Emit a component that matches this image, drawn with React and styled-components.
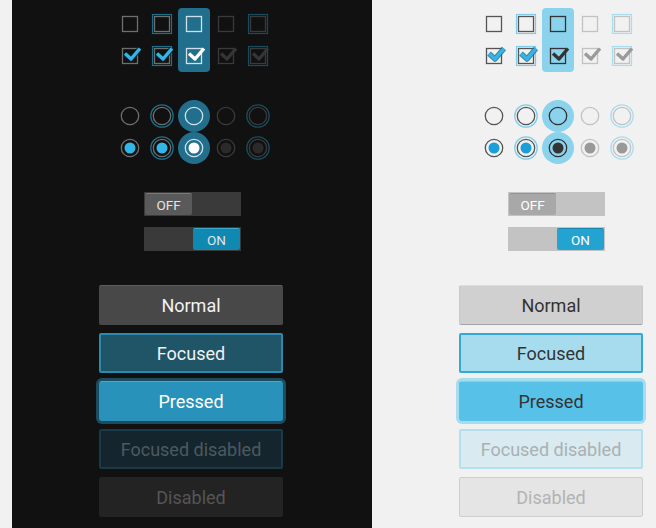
import React from 'react';
import styled, { createGlobalStyle } from 'styled-components';

const GlobalStyle = createGlobalStyle`
  html, body {
    margin: 0;
    padding: 0;
    background: #f1f1f1;
    font-family: Roboto, "Noto Sans", sans-serif;
  }
`;

const palettes = {
  dark: {
    bg: '#111111',
    box: '#6e6e6e',
    boxOff: '#3a3a3a',
    ring: '#1b6d8a',
    ringOff: '#174b5d',
    press: '#216f8d',
    pressBox: '#cfe0e7',
    check: '#33b5e5',
    checkEdge: '#06222d',
    checkPress: '#ffffff',
    checkOff: '#353535',
    dot: '#33b5e5',
    dotPress: '#ffffff',
    dotOff: '#2a2a2a',
  },
  light: {
    bg: '#f1f1f1',
    box: '#555555',
    boxOff: '#c2c2c2',
    ring: '#7fcdeb',
    ringOff: '#a9def1',
    press: '#8bd2ec',
    pressBox: '#333333',
    check: '#33b5e5',
    checkEdge: '#1c6e8d',
    checkPress: '#333333',
    checkOff: '#9a9a9a',
    dot: '#1a9fd6',
    dotPress: '#333333',
    dotOff: '#999999',
  },
};

const states = ['normal', 'focused', 'pressed', 'disabled', 'disabledFocused'];

const Checkbox = ({ p, state, checked }) => {
  const off = state === 'disabled' || state === 'disabledFocused';
  const boxColor = state === 'pressed' ? p.pressBox : off ? p.boxOff : p.box;
  let checkColor = p.check;
  if (state === 'pressed') checkColor = p.checkPress;
  if (off) checkColor = p.checkOff;
  return (
    <svg width="32" height="32" viewBox="0 0 32 32">
      {(state === 'focused' || state === 'disabledFocused') && (
        <rect x="6.5" y="6.5" width="19" height="19" fill="none"
          stroke={state === 'focused' ? p.ring : p.ringOff} strokeWidth="1.2" />
      )}
      <rect x="8.5" y="8.5" width="15" height="15" fill="none" stroke={boxColor} strokeWidth="1.3" />
      {checked && !off && state !== 'pressed' && (
        <path d="M11 13.5 L17 19 L26 8.5" fill="none" stroke={p.checkEdge}
          strokeWidth="5.5" strokeLinejoin="round" opacity="0.8" />
      )}
      {checked && (
        <path d="M11 13.5 L17 19 L26 8.5" fill="none" stroke={checkColor}
          strokeWidth="3.4" strokeLinejoin="round" />
      )}
    </svg>
  );
};

const Radio = ({ p, state, checked }) => {
  const off = state === 'disabled' || state === 'disabledFocused';
  const ringColor = state === 'pressed' ? p.pressBox : off ? p.boxOff : p.box;
  let dotColor = p.dot;
  if (state === 'pressed') dotColor = p.dotPress;
  if (off) dotColor = p.dotOff;
  return (
    <svg width="32" height="32" viewBox="0 0 32 32">
      {state === 'pressed' && <circle cx="16" cy="16" r="16" fill={p.press} />}
      {(state === 'focused' || state === 'disabledFocused') && (
        <circle cx="16" cy="16" r="11.2" fill="none"
          stroke={state === 'focused' ? p.ring : p.ringOff} strokeWidth="1.3" />
      )}
      <circle cx="16" cy="16" r="8.7" fill="none" stroke={ringColor} strokeWidth="1.3" />
      {checked && <circle cx="16" cy="16" r="5.5" fill={dotColor} />}
    </svg>
  );
};

const Toggle = ({ on, label }) => (
  <Track $on={on}>
    <Thumb $on={on}>{label}</Thumb>
  </Track>
);

const buttons = [
  ['normal', 'Normal'],
  ['focused', 'Focused'],
  ['pressed', 'Pressed'],
  ['focusedDisabled', 'Focused disabled'],
  ['disabled', 'Disabled'],
];

const WidgetPanel = ({ theme, shift }) => {
  const p = palettes[theme];
  const dark = theme === 'dark';
  return (
    <Panel $dark={dark}>
      <ControlGrid $shift={shift + 2}>
        {[false, true].map((checked) =>
          states.map((s) => (
            <Cell key={`c-${checked}-${s}`} $press={s === 'pressed'} $bg={p.press} $top={!checked}>
              <Checkbox p={p} state={s} checked={checked} />
            </Cell>
          ))
        )}
      </ControlGrid>
      <RadioGrid $shift={shift + 2}>
        {[false, true].map((checked) =>
          states.map((s) => (
            <Spot key={`r-${checked}-${s}`}>
              <Radio p={p} state={s} checked={checked} />
            </Spot>
          ))
        )}
      </RadioGrid>
      <ToggleStack $shift={shift} $dark={dark}>
        <Toggle on={false} label="OFF" />
        <Toggle on label="ON" />
      </ToggleStack>
      <ButtonStack>
        {buttons.map(([kind, label]) => (
          <Button key={kind} $kind={kind} $dark={dark}>{label}</Button>
        ))}
      </ButtonStack>
    </Panel>
  );
};

const App = () => (
  <>
    <GlobalStyle />
    <Page>
      <WidgetPanel theme="dark" shift={0} />
      <WidgetPanel theme="light" shift={4} />
    </Page>
  </>
);

const Page = styled.div`
  display: flex;
  height: 528px;
  padding-left: 12px;
  overflow: hidden;
`;

const Panel = styled.div`
  width: 360px;
  flex-shrink: 0;
  height: 528px;
  box-sizing: border-box;
  padding-top: 8px;
  display: flex;
  flex-direction: column;
  align-items: center;
  background: ${({ $dark }) => ($dark ? '#111111' : '#f1f1f1')};

  --track: ${({ $dark }) => ($dark ? '#3a3a3a' : '#c3c3c3')};
  --thumb-off: ${({ $dark }) => ($dark ? '#5a5a5a' : '#a8a8a8')};
  --thumb-off-edge: ${({ $dark }) => ($dark ? '#7a7a7a' : '#939393')};
  --thumb-on: ${({ $dark }) => ($dark ? '#0f88b2' : '#22a3d2')};
  --thumb-on-edge: ${({ $dark }) => ($dark ? '#3fa8cc' : '#1a86ae')};
  --thumb-text: ${({ $dark }) => ($dark ? '#e4e4e4' : '#ffffff')};
`;

const ControlGrid = styled.div`
  display: grid;
  grid-template-columns: repeat(5, 32px);
  grid-auto-rows: 32px;
  margin-left: ${({ $shift }) => $shift * 2}px;
`;

const Cell = styled.div`
  width: 32px;
  height: 32px;
  background: ${({ $press, $bg }) => ($press ? $bg : 'transparent')};
  border-radius: ${({ $top }) => ($top ? '4px 4px 0 0' : '0 0 4px 4px')};

  svg {
    display: block;
  }
`;

const RadioGrid = styled(ControlGrid)`
  margin-top: 28px;
`;

const Spot = styled.div`
  width: 32px;
  height: 32px;

  svg {
    display: block;
  }
`;

const ToggleStack = styled.div`
  display: flex;
  flex-direction: column;
  gap: 11px;
  margin-top: 28px;
  margin-left: ${({ $shift }) => $shift * 2 + 1}px;
`;

const Track = styled.div`
  width: 97px;
  height: 24px;
  box-sizing: border-box;
  padding: 1px;
  background: var(--track);
  display: flex;
  justify-content: ${({ $on }) => ($on ? 'flex-end' : 'flex-start')};
`;

const Thumb = styled.div`
  width: 47px;
  height: 22px;
  box-sizing: border-box;
  display: flex;
  align-items: center;
  justify-content: center;
  font-size: 13.5px;
  color: var(--thumb-text);
  background: ${({ $on }) => ($on ? 'var(--thumb-on)' : 'var(--thumb-off)')};
  border-top: 1px solid ${({ $on }) => ($on ? 'var(--thumb-on-edge)' : 'var(--thumb-off-edge)')};
  border-radius: 2px;
`;

const buttonLooks = {
  dark: {
    normal: { bg: '#484848', border: '#484848', top: '#5e5e5e', color: '#f2f2f2', halo: 'none' },
    focused: { bg: '#1f5567', border: '#2a8ab0', top: '#2a8ab0', color: '#f2f2f2', halo: 'none' },
    pressed: { bg: '#2892bb', border: '#2892bb', top: '#49a9cc', color: '#ffffff', halo: '#1c4c5d' },
    focusedDisabled: { bg: '#15252d', border: '#193a47', top: '#193a47', color: '#4b5a60', halo: 'none' },
    disabled: { bg: '#232323', border: '#232323', top: '#232323', color: '#555555', halo: 'none' },
  },
  light: {
    normal: { bg: '#d0d0d0', border: '#c8c8c8', top: '#dcdcdc', color: '#333333', halo: 'none', bottom: '#a5a5a5' },
    focused: { bg: '#a6dcee', border: '#33a9d3', top: '#33a9d3', color: '#333333', halo: 'none' },
    pressed: { bg: '#58c1e7', border: '#58c1e7', top: '#7fd0ee', color: '#333333', halo: '#a5dcf0' },
    focusedDisabled: { bg: '#d9eaf0', border: '#b4e0ee', top: '#b4e0ee', color: '#a9b1b4', halo: 'none' },
    disabled: { bg: '#e5e5e5', border: '#cecece', top: '#cecece', color: '#b3b3b3', halo: 'none' },
  },
};

const ButtonStack = styled.div`
  display: flex;
  flex-direction: column;
  gap: 8px;
  margin-top: 34px;
  margin-right: 2px;
`;

const Button = styled.div`
  width: 184px;
  height: 40px;
  box-sizing: border-box;
  display: flex;
  align-items: center;
  justify-content: center;
  padding-top: 1px;
  font-size: 18px;
  border-radius: 2px;
  ${({ $dark, $kind }) => {
    const l = buttonLooks[$dark ? 'dark' : 'light'][$kind];
    const wide = $kind === 'focused' || $kind === 'focusedDisabled';
    return `
      background: ${l.bg};
      color: ${l.color};
      border: ${wide ? 2 : 1}px solid ${l.border};
      border-top-color: ${l.top};
      ${l.bottom ? `border-bottom-color: ${l.bottom};` : ''}
      box-shadow: ${l.halo === 'none' ? 'none' : `0 0 0 3px ${l.halo}`};
      ${l.halo === 'none' ? '' : 'border-radius: 3px;'}
    `;
  }}
`;

export default App;
